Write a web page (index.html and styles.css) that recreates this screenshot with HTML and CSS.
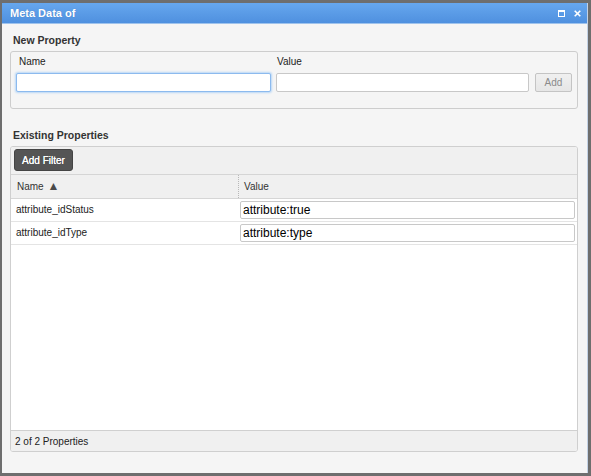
FILE: index.html
```html
<!DOCTYPE html>
<html>
<head>
<meta charset="utf-8">
<title>Meta Data</title>
<link rel="stylesheet" href="styles.css">
</head>
<body>
<div class="window">
  <div class="titlebar">
    <span class="title">Meta Data of</span>
    <div class="tools">
      <svg class="tool-max" width="7" height="7" viewBox="0 0 7 7"><rect x="0.5" y="0.5" width="6" height="6" fill="none" stroke="#fff" stroke-width="1"/><rect x="0" y="0" width="7" height="2" fill="#fff"/></svg>
      <svg class="tool-close" width="7" height="7" viewBox="0 0 7 7"><path d="M0.7 0.7L6.3 6.3M6.3 0.7L0.7 6.3" stroke="#fff" stroke-width="1.6"/></svg>
    </div>
  </div>
  <div class="content">
    <div class="section-title">New Property</div>
    <div class="fieldset">
      <div class="field field-name">
        <label class="field-label label-name">Name</label>
        <input class="text-input focused" type="text">
      </div>
      <div class="field field-value">
        <label class="field-label label-value">Value</label>
        <input class="text-input" type="text">
      </div>
      <button class="add-btn">Add</button>
    </div>
    <div class="section-title second">Existing Properties</div>
    <div class="panel">
      <div class="toolbar">
        <button class="filter-btn">Add Filter</button>
      </div>
      <div class="grid-header">
        <div class="hcell hname">Name <span class="sort">&#9650;</span></div>
        <div class="hcell hvalue">Value</div>
      </div>
      <div class="grid-row">
        <div class="cell cname">attribute_idStatus</div>
        <div class="cell cvalue"><input class="value-input" type="text" value="attribute:true"></div>
      </div>
      <div class="grid-row">
        <div class="cell cname">attribute_idType</div>
        <div class="cell cvalue"><input class="value-input" type="text" value="attribute:type"></div>
      </div>
      <div class="grid-empty"></div>
      <div class="footer">2 of 2 Properties</div>
    </div>
  </div>
</div>
</body>
</html>
```
FILE: styles.css
```css
html, body {
  margin: 0;
  padding: 0;
}
body {
  width: 591px;
  height: 476px;
  overflow: hidden;
  background: #6e6e6e;
  font-family: "Liberation Sans", Arial, sans-serif;
  font-size: 10px;
  color: #222;
}
.window {
  margin: 3px 0 0 2px;
  width: 585px;
  height: 470px;
  border-right: 1px solid #c3d2e6;
  background: #f5f5f5;
  display: flex;
  flex-direction: column;
}
.titlebar {
  height: 20px;
  border-bottom: 1px solid #9fc3ec;
  background: linear-gradient(#66a7ee, #4f90df);
  display: flex;
  align-items: center;
  padding: 0 6px 0 8px;
}
.title {
  flex: 1;
  color: #fff;
  font-weight: bold;
  font-size: 11px;
  line-height: 20px;
  text-shadow: 0 0 1px rgba(40, 80, 140, 0.4);
}
.tools {
  display: flex;
  align-items: center;
  gap: 9px;
  padding-top: 1px;
}
.tools svg {
  display: block;
}
.content {
  flex: 1;
  display: flex;
  flex-direction: column;
  padding: 0 9px 21px 8px;
}
.section-title {
  padding-top: 9px;
  padding-left: 3px;
  line-height: 14px;
  margin-bottom: 4px;
  font-weight: bold;
  font-size: 10.5px;
  color: #333;
}
.section-title.second {
  padding-top: 19px;
}
.fieldset {
  display: flex;
  border: 1px solid #cdcdcd;
  border-radius: 3px;
  padding: 4px 5px 16px 5px;
}
.field {
  display: flex;
  flex-direction: column;
}
.field-name {
  width: 255px;
}
.field-value {
  width: 253px;
  margin-left: 5px;
}
.field-label {
  line-height: 12px;
  height: 12px;
  margin-bottom: 5px;
  color: #222;
}
.label-name {
  padding-left: 3px;
}
.label-value {
  padding-left: 1px;
}
.text-input {
  box-sizing: border-box;
  width: 100%;
  height: 19px;
  margin: 0;
  border: 1px solid #c8c8c8;
  border-radius: 2px;
  background: #fff;
  outline: none;
  font-family: "Liberation Sans", Arial, sans-serif;
  font-size: 12px;
}
.text-input.focused {
  border-color: #8cbaee;
  box-shadow: 0 0 2px 1px #b9d7f6;
}
.add-btn {
  align-self: flex-end;
  box-sizing: border-box;
  width: 37px;
  height: 19px;
  margin: 0 0 0 6px;
  padding: 0;
  border: 1px solid #c4c4c4;
  border-radius: 2px;
  background: linear-gradient(#f0f0f0, #e6e6e6);
  color: #8a8a8a;
  font-family: "Liberation Sans", Arial, sans-serif;
  font-size: 10px;
}
.panel {
  flex: 1;
  display: flex;
  flex-direction: column;
  border: 1px solid #cfcfcf;
  border-radius: 3px;
  background: #fff;
  overflow: hidden;
}
.toolbar {
  height: 28px;
  box-sizing: border-box;
  padding: 2px 3px 0;
  background: #f0f0f0;
  border-bottom: 1px solid #d5d5d5;
}
.filter-btn {
  box-sizing: border-box;
  width: 59px;
  height: 22px;
  margin: 0;
  padding: 0;
  border: 1px solid #444;
  border-radius: 3px;
  background: #555;
  color: #fff;
  font-family: "Liberation Sans", Arial, sans-serif;
  font-size: 10px;
  text-shadow: 0 0 0.6px #fff;
}
.grid-header {
  display: flex;
  height: 23px;
  background: #f0f0f0;
  border-bottom: 1px solid #d6d6d6;
}
.hcell {
  line-height: 23px;
  color: #333;
}
.hname {
  width: 221px;
  padding-left: 6px;
  border-right: 1px dotted #b8b8b8;
}
.sort {
  font-size: 12px;
  color: #4a4a4a;
  margin-left: 1px;
}
.hvalue {
  padding-left: 5px;
}
.grid-row {
  display: flex;
  height: 22px;
  border-bottom: 1px solid #e4e4e4;
}
.cname {
  width: 223px;
  padding-left: 5px;
  line-height: 22px;
  color: #222;
}
.cvalue {
  flex: 1;
  padding: 2px 2px 0 1px;
}
.value-input {
  box-sizing: border-box;
  width: 100%;
  height: 18px;
  margin: 0;
  padding: 0 2px;
  border: 1px solid #c8c8c8;
  border-radius: 2px;
  background: #fff;
  outline: none;
  font-family: "Liberation Sans", Arial, sans-serif;
  font-size: 12px;
  color: #000;
}
.grid-empty {
  flex: 1;
}
.footer {
  height: 20px;
  line-height: 21px;
  padding-left: 4px;
  border-top: 1px solid #d0d0d0;
  background: #f0f0f0;
  color: #222;
}
```
